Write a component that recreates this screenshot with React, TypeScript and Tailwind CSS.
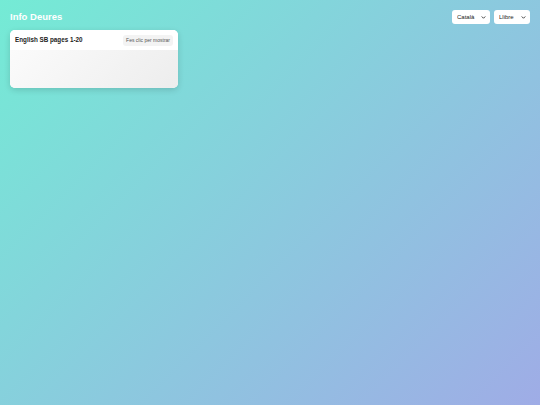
function Chevron() {
  return (
    <svg
      viewBox="0 0 10 10"
      className="pointer-events-none absolute right-[4px] top-[4.5px] h-[5px] w-[5px]"
      fill="none"
      stroke="#333"
      strokeWidth="1.8"
      strokeLinecap="round"
      strokeLinejoin="round"
    >
      <path d="M2 3.5 5 6.5 8 3.5" />
    </svg>
  );
}

function Picker({ label, width }: { label: string; width: string }) {
  return (
    <div className={`relative flex h-[14px] ${width}`}>
      <select className="h-[14px] w-full appearance-none rounded-[3px] bg-white pl-[5px] text-[6px] leading-none text-[#222] outline-none">
        <option>{label}</option>
      </select>
      <Chevron />
    </div>
  );
}

export default function App() {
  return (
    <div className="min-h-screen w-full bg-[linear-gradient(135deg,#74ebd5_0%,#9face6_100%)] font-['Liberation_Sans',Arial,sans-serif] antialiased">
      <header className="flex items-center justify-between px-[10px] pt-[10px]">
        <h1 className="text-[9.5px] font-bold leading-[14px] text-white">Info Deures</h1>
        <div className="flex gap-[4px]">
          <Picker label="Català" width="w-[38px]" />
          <Picker label="Llibre" width="w-[36px]" />
        </div>
      </header>
      <main className="px-[10px] pt-[6px]">
        <div className="w-[168px] overflow-hidden rounded-[5px] bg-white shadow-[0_2px_6px_rgba(0,0,0,0.15)]">
          <div className="flex h-[20px] items-center justify-between bg-white px-[5px]">
            <span className="text-[6.3px] font-bold text-[#222]">English SB pages 1-20</span>
            <span className="rounded-[3px] bg-[#f3f3f3] px-[3px] py-[3px] text-[5px] leading-none text-[#555]">
              Fes clic per mostrar
            </span>
          </div>
          <div className="h-[38px] bg-[linear-gradient(135deg,#fbfbfb_0%,#ededed_100%)]" />
        </div>
      </main>
    </div>
  );
}
